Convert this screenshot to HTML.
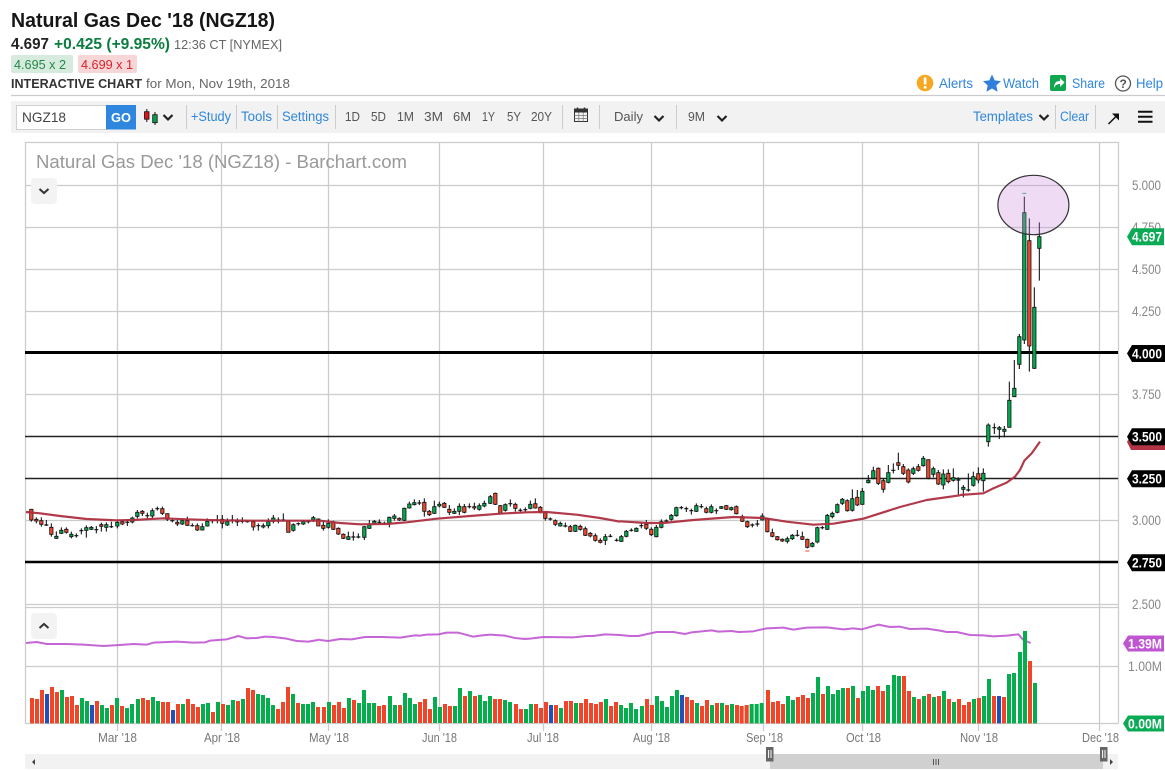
<!DOCTYPE html>
<html><head><meta charset="utf-8"><title>Natural Gas Dec '18 (NGZ18)</title>
<style>
html,body{margin:0;padding:0;background:#fff;width:1165px;height:770px;overflow:hidden}
svg{display:block}
text{font-family:"Liberation Sans",sans-serif}
.b{fill:#2f86de;font-size:13.5px}
.t{fill:#555;font-size:13px}
.ax{fill:#888;font-size:13.5px}
.dt{fill:#777;font-size:13px}
.tg{fill:#fff;font-size:14px;font-weight:bold}
.gr{stroke:#ccc;stroke-width:1.3;fill:none}
.sp{stroke:#ccc;stroke-width:1;fill:none}
.ch{stroke:#222;stroke-width:2.2;fill:none}
.w{stroke:#111;stroke-width:3.2;fill:none}
.d{stroke:#111;stroke-width:3.5;fill:none}
.g{fill:#00ab4e;stroke:#111;stroke-width:2.4}
.r{fill:#f0452a;stroke:#111;stroke-width:2.4}
.vg{fill:#05ae4c}.vr{fill:#f04528}.vb{fill:#2050b8}
.pu{fill:none;stroke:#c055d2;stroke-width:6;stroke-linejoin:round;opacity:.9}
.ma{fill:none;stroke:#ad2e40;stroke-width:6.5;stroke-linejoin:round;opacity:.95}
</style></head><body>
<svg width="1165" height="770" viewBox="0 0 1165 770" xmlns="http://www.w3.org/2000/svg">
<!-- header -->
<text x="11" y="27" font-size="20" font-weight="bold" fill="#151515" textLength="264" lengthAdjust="spacingAndGlyphs">Natural Gas Dec '18 (NGZ18)</text>
<text x="11" y="49" font-size="15.5" font-weight="bold" fill="#222" textLength="38" lengthAdjust="spacingAndGlyphs">4.697</text>
<text x="54" y="49" font-size="15.5" font-weight="bold" fill="#0b7d3e" textLength="116" lengthAdjust="spacingAndGlyphs">+0.425 (+9.95%)</text>
<text x="174" y="49" font-size="13" fill="#666" textLength="108" lengthAdjust="spacingAndGlyphs">12:36 CT [NYMEX]</text>
<rect x="11" y="55" width="62" height="18" rx="2" fill="#d6ebdd"/>
<text x="14" y="69" font-size="13" fill="#23884a" textLength="52" lengthAdjust="spacingAndGlyphs">4.695 x 2</text>
<rect x="78" y="55" width="59" height="18" rx="2" fill="#f6d6d6"/>
<text x="81" y="69" font-size="13" fill="#d8232a" textLength="52" lengthAdjust="spacingAndGlyphs">4.699 x 1</text>
<text x="11" y="88" font-size="12.5" font-weight="bold" fill="#333" textLength="131" lengthAdjust="spacingAndGlyphs">INTERACTIVE CHART</text>
<text x="146" y="88" font-size="13" fill="#666" textLength="144" lengthAdjust="spacingAndGlyphs">for Mon, Nov 19th, 2018</text>
<!-- top right -->
<circle cx="925" cy="83" r="8.3" fill="#f7a823"/><rect x="923.8" y="77.5" width="2.6" height="7" fill="#fff"/><rect x="923.8" y="86" width="2.6" height="2.6" fill="#fff"/>
<text x="939" y="88" class="b" textLength="34" lengthAdjust="spacingAndGlyphs">Alerts</text>
<path d="M992 74.500l2.700 5.900 6.300.7-4.700 4.300 1.300 6.300-5.600-3.200-5.600 3.200 1.300-6.300-4.700-4.300 6.300-.7z" fill="#2f7fdb"/>
<text x="1003" y="88" class="b" textLength="36" lengthAdjust="spacingAndGlyphs">Watch</text>
<rect x="1050" y="75" width="16" height="16" rx="2" fill="#11a650"/>
<path d="M1054 88c0-5 2-7 6-7v-3l4.500 4.500-4.500 4.500v-3c-3 0-4.500 1-6 4z" fill="#fff"/>
<text x="1072" y="88" class="b" textLength="33" lengthAdjust="spacingAndGlyphs">Share</text>
<circle cx="1123" cy="83.500" r="7.500" fill="none" stroke="#555" stroke-width="1.300"/>
<text x="1119.500" y="88" font-size="12" font-weight="bold" fill="#555">?</text>
<text x="1136" y="88" class="b" textLength="27" lengthAdjust="spacingAndGlyphs">Help</text>
<path d="M11 95.500H1165" stroke="#ccc" stroke-width="1.200"/>
<!-- toolbar -->
<rect x="11" y="101" width="1154" height="32" fill="#f2f2f2"/>
<rect x="16.500" y="105.500" width="90" height="24" fill="#fff" stroke="#d0d0d0"/>
<text x="22" y="122" font-size="14" fill="#444" textLength="44" lengthAdjust="spacingAndGlyphs">NGZ18</text>
<rect x="106" y="105" width="30" height="24.500" fill="#2f86de"/>
<text x="111" y="122" font-size="13" font-weight="bold" fill="#fff" textLength="20" lengthAdjust="spacingAndGlyphs">GO</text>
<path d="M146.800 109V122M155 112V125" stroke="#111"/>
<rect x="144.500" y="111.700" width="4.500" height="7.500" fill="#d8131b" stroke="#111" stroke-width=".8"/>
<rect x="152.700" y="114.700" width="4.500" height="8" fill="#0a9a48" stroke="#111" stroke-width=".8"/>
<path class="ch" d="M163.500 115l4.500 4.500 4.500-4.500"/>
<path class="sp" d="M186.500 105V129M236.500 105V129M277.500 105V129M335.500 105V129M562.500 105V129M599.500 105V129M676.500 105V129M1055.500 105V129M1095.500 105V129"/>
<text x="191" y="121" class="b" textLength="40" lengthAdjust="spacingAndGlyphs">+Study</text>
<text x="241" y="121" class="b" textLength="31" lengthAdjust="spacingAndGlyphs">Tools</text>
<text x="282" y="121" class="b" textLength="47" lengthAdjust="spacingAndGlyphs">Settings</text>
<text x="345" y="121" class="t" textLength="15" lengthAdjust="spacingAndGlyphs">1D</text>
<text x="371" y="121" class="t" textLength="15" lengthAdjust="spacingAndGlyphs">5D</text>
<text x="397" y="121" class="t" textLength="17" lengthAdjust="spacingAndGlyphs">1M</text>
<text x="424" y="121" class="t" textLength="19" lengthAdjust="spacingAndGlyphs">3M</text>
<text x="453" y="121" class="t" textLength="18" lengthAdjust="spacingAndGlyphs">6M</text>
<text x="482" y="121" class="t" textLength="13" lengthAdjust="spacingAndGlyphs">1Y</text>
<text x="507" y="121" class="t" textLength="14" lengthAdjust="spacingAndGlyphs">5Y</text>
<text x="531" y="121" class="t" textLength="21" lengthAdjust="spacingAndGlyphs">20Y</text>
<rect x="574.500" y="109" width="13" height="12.500" fill="#f2f2f2" stroke="#333" stroke-width="1"/>
<rect x="574.500" y="109" width="13" height="3.500" fill="#333"/>
<path d="M577.500 107.500v3M584.500 107.500v3" stroke="#333" stroke-width="1.500"/>
<path d="M578.800 112.500v9M583.200 112.500v9M574.500 115.500h13M574.500 118.500h13" stroke="#777" stroke-width=".7"/>
<text x="614" y="121" class="t" textLength="29" lengthAdjust="spacingAndGlyphs">Daily</text>
<path class="ch" d="M654.500 116l4.500 4.500 4.500-4.500"/>
<text x="688" y="121" class="t" textLength="17" lengthAdjust="spacingAndGlyphs">9M</text>
<path class="ch" d="M717.500 116l4.500 4.500 4.500-4.500"/>
<text x="973" y="121" class="b" textLength="60" lengthAdjust="spacingAndGlyphs">Templates</text>
<path class="ch" d="M1039.500 115l4.500 4.500 4.500-4.500"/>
<text x="1060" y="121" class="b" textLength="29" lengthAdjust="spacingAndGlyphs">Clear</text>
<path d="M1108.500 124l9-9" stroke="#111" stroke-width="1.500"/><path d="M1112 113.500h7v7z" fill="#111"/>
<path d="M1138 111.700h14.500M1138 116.700h14.500M1138 121.700h14.500" stroke="#111" stroke-width="2"/>
<!-- chart grid -->
<path class="gr" d="M25.500 142V723.500M1118.500 142V723.500M25 142.500H1118.500M25 185.500H1118M25 227.500H1118M25 269.500H1118M25 311.500H1118M25 394.500H1118M25 520.500H1118M25 604.500H1118M25 607.500H1118M25 666.500H1118M25 723.500H1118"/>
<path class="gr" d="M117.500 142V731M221.500 142V731M328.500 142V731M439.500 142V731M543.500 142V731M651.500 142V731M763.500 142V731M862.500 142V731M978.500 142V731M1099.500 142V731"/>
<path d="M25 352.500H1118" stroke="#000" stroke-width="3"/>
<path d="M25 436.500H1118M25 478.500H1118" stroke="#222" stroke-width="1.400"/>
<path d="M25 562H1118" stroke="#000" stroke-width="2.500"/>
<text x="36" y="168" font-size="18" fill="#999" textLength="371" lengthAdjust="spacingAndGlyphs">Natural Gas Dec '18 (NGZ18) - Barchart.com</text>
<rect x="31" y="178" width="26" height="26" rx="4" fill="#f3f3f3"/>
<path d="M39.500 189l4.500 4 4.500-4" fill="none" stroke="#333" stroke-width="2"/>
<rect x="31" y="613" width="26" height="26" rx="4" fill="#f3f3f3"/>
<path d="M39.500 628l4.500-4 4.500 4" fill="none" stroke="#333" stroke-width="2"/>
<!-- candles A -->
<g transform="translate(20 490) scale(.33333)">
<path class="w" d="M34 58V95M49 82V100M64 82V110M79 90V108M94 100V140M109 124V147M124 112V132M139 112V131M154 125V145M169 130V143M184 115V133M199 106V143M214 108V120M229 108V130M244 98V125M259 97V125M274 95V114M292 92V115M307 90V105M322 88V108M337 80V100M352 60V85M367 60V78M382 68V85M397 55V84M412 50V62M427 50V75M442 70V93M457 85V97M472 90V108M487 85V105M502 80V108M517 100V110M532 100V123M547 100V122M562 85V110M577 88V100M592 75V100M607 75V115M622 85V108M637 75V100M652 85V108M667 82V100M682 90V98M700 90V122M715 100V122M730 100V115M745 85V115M760 75V100M775 82V100M790 70V95M805 90V127M820 100V125M835 97V107M850 90V105M865 90V100M880 78V96M895 85V108"/>
<path class="d" d="M73 105h12M163 137h12M178 122h12M223 119h12M268 110h12M316 97h12M376 77h12M406 56h12M451 92h12M511 107h12M571 92h12M586 90h12M631 90h12M661 94h12M676 95h12M709 107h12M769 90h12M784 90h12M829 101h12M859 95h12"/>
<path class="g" d="M104 139h10v6h-10zM119 121h10v9h-10zM149 133h10v7h-10zM194 113h10v8h-10zM209 112h10v6h-10zM254 104h10v8h-10zM287 97h10v11h-10zM332 84h10v12h-10zM347 67h10v12h-10zM392 62h10v16h-10zM482 92h10v10h-10zM542 110h10v10h-10zM557 94h10v14h-10zM617 95h10v10h-10zM725 107h10v4h-10zM740 95h10v12h-10zM755 84h10v10h-10zM815 104h10v17h-10zM845 95h10v7h-10zM875 83h10v7h-10z"/>
<path class="r" d="M29 58h10v32h-10zM44 88h10v5h-10zM59 92h10v11h-10zM89 112h10v21h-10zM134 118h10v9h-10zM239 104h10v5h-10zM302 95h10v7h-10zM362 64h10v6h-10zM422 56h10v14h-10zM437 71h10v17h-10zM467 97h10v5h-10zM497 92h10v14h-10zM527 107h10v13h-10zM602 88h10v12h-10zM647 92h10v4h-10zM695 95h10v16h-10zM800 92h10v35h-10zM890 87h10v21h-10z"/>
</g>
<!-- candles B -->
<g transform="translate(320 490) scale(.33333)">
<path class="w" d="M10 90V122M25 88V116M40 92V120M55 112V135M70 130V147M85 125V150M100 125V152M115 130V145M133 108V150M148 90V117M163 90V102M178 88V102M193 95V103M208 80V112M223 72V92M238 82V93M253 53V93M268 35V56M283 28V46M298 30V45M313 25V80M328 60V78M343 32V72M358 35V52M373 36V54M388 45V75M403 55V72M418 40V75M433 42V70M448 40V55M463 38V60M478 40V62M493 32V52M511 15V42M526 8V45M541 45V72M556 40V65M571 28V50M586 38V65M601 55V68M616 52V65M631 32V58M646 25V56M661 48V70M676 65V92M691 82V92M706 88V108M721 95V110M736 98V112M751 105V126M766 104V126M781 104V122M796 110V138M811 126V142M826 130V155M841 145V160M856 132V165M871 132V142M890 145V155"/>
<path class="d" d="M94 141h12M109 141h12M172 97h12M187 100h12M292 39h12M595 61h12M610 59h12M565 41h12M685 87h12M730 108h12M865 139h12M884 151h12M442 50h12"/>
<path class="g" d="M20 100h10v12h-10zM80 140h10v8h-10zM128 110h10v32h-10zM143 105h10v10h-10zM158 94h10v6h-10zM203 82h10v18h-10zM218 78h10v7h-10zM248 55h10v36h-10zM263 42h10v12h-10zM278 38h10v6h-10zM338 50h10v20h-10zM353 43h10v5h-10zM398 64h10v6h-10zM413 49h10v15h-10zM473 47h10v11h-10zM488 40h10v8h-10zM506 20h10v20h-10zM551 44h10v17h-10zM626 43h10v12h-10zM716 100h10v8h-10zM761 106h10v18h-10zM851 140h10v11h-10z"/>
<path class="r" d="M5 106h10v9h-10zM35 96h10v22h-10zM50 115h10v17h-10zM65 133h10v12h-10zM233 85h10v5h-10zM308 37h10v27h-10zM323 64h10v10h-10zM368 40h10v12h-10zM383 58h10v9h-10zM428 50h10v17h-10zM458 50h10v4h-10zM521 10h10v33h-10zM536 47h10v23h-10zM581 43h10v12h-10zM641 41h10v13h-10zM656 52h10v13h-10zM671 68h10v17h-10zM701 92h10v11h-10zM746 110h10v14h-10zM776 109h10v9h-10zM791 116h10v20h-10zM806 130h10v8h-10zM821 137h10v14h-10zM836 151h10v6h-10z"/>
</g>
<!-- candles C -->
<g transform="translate(620 440) scale(.33333)">
<path class="w" d="M4 285V306M19 270V292M34 265V275M49 262V276M64 250V265M79 240V270M94 262V288M109 255V292M124 238V265M139 238V246M154 222V242M169 200V230M184 198V208M199 200V216M214 206V224M229 190V216M244 192V205M259 200V220M274 193V220M289 205V222M304 198V207M319 195V210M334 200V212M349 196V223M367 224V246M382 242V264M397 250V262M412 240V260M427 220V242M442 233V277M457 266V292M472 288V302M487 295V306M502 290V310M517 282V300M532 270V290M547 275V300M562 296V325M577 306V322M592 260V310M607 258V268M622 222V270M637 215V235M652 190V220M667 174V195M682 178V215M697 148V215M712 150V198M727 144V195M745 105V130M760 80V118M775 82V135M790 115V158M805 75V130M820 70V100M835 38V90M850 72V105M865 85V130M880 80V105M895 72V95M910 48V80M925 58V118M940 80V112M955 90V135M970 88V148M985 88V130M1000 85V125M1015 112V165"/>
<path class="d" d="M28 271h12M58 257h12M133 243h12M178 203h12M193 206h12M208 212h12M238 200h12M283 212h12M391 255h12M406 252h12M526 286h12M601 263h12M814 91h12M1009 120h12"/>
<path class="g" d="M-1 290h10v14h-10zM14 274h10v15h-10zM44 265h10v9h-10zM104 262h10v28h-10zM119 245h10v17h-10zM149 226h10v12h-10zM164 203h10v24h-10zM224 197h10v17h-10zM269 200h10v17h-10zM299 200h10v5h-10zM329 203h10v6h-10zM422 228h10v12h-10zM497 296h10v8h-10zM512 286h10v10h-10zM572 310h10v9h-10zM587 263h10v43h-10zM617 226h10v42h-10zM632 220h10v10h-10zM647 194h10v23h-10zM662 178h10v12h-10zM692 176h10v35h-10zM722 154h10v39h-10zM740 121h10v7h-10zM755 92h10v23h-10zM800 98h10v29h-10zM875 86h10v14h-10zM905 55h10v22h-10zM935 86h10v17h-10zM965 102h10v33h-10zM995 113h10v8h-10z"/>
<path class="r" d="M74 253h10v12h-10zM89 268h10v16h-10zM254 206h10v11h-10zM314 197h10v11h-10zM344 200h10v21h-10zM362 230h10v14h-10zM377 245h10v15h-10zM437 236h10v39h-10zM452 278h10v11h-10zM467 290h10v9h-10zM482 298h10v5h-10zM542 290h10v8h-10zM557 298h10v24h-10zM677 182h10v30h-10zM707 172h10v23h-10zM770 85h10v45h-10zM785 122h10v26h-10zM830 68h10v8h-10zM845 80h10v20h-10zM860 90h10v36h-10zM890 80h10v11h-10zM920 59h10v56h-10zM950 98h10v34h-10zM980 100h10v25h-10z"/>
<path d="M556 333h12" stroke="#f0452a" stroke-width="3"/>
</g>
<!-- candles D -->
<g transform="translate(960 390) scale(.33333)">
<path class="w" d="M10 285V322M25 250V305M40 245V290M55 232V280M70 235V305M85 100V170M103 100V132M118 108V147M133 108V142M148 0V113"/>
<path class="d" d="M19 300h12M97 113h12"/>
<path class="g" d="M5 292h10v6h-10zM35 260h10v26h-10zM65 250h10v22h-10zM80 105h10v50h-10zM113 113h10v5h-10zM128 118h10v6h-10zM143 31h10v81h-10z"/>
<path class="r" d="M50 251h10v19h-10z"/>
</g>
<!-- candles E -->
<g transform="translate(960 170) scale(.33333)">
<path class="w" d="M148 635V660M163 570V668M178 492V597M193 80V522M208 145V605M223 352V597M238 157V332"/>
<path class="g" d="M158 655h10v25h-10zM173 500h10v83h-10zM188 128h10v382h-10zM218 412h10v183h-10zM233 200h10v35h-10z"/>
<path class="r" d="M203 212h10v316h-10z"/>
<path d="M187 70h12" stroke="#3aa878" stroke-width="3"/>
</g>
<!-- moving average -->
<g transform="translate(20 490) scale(.33333)"><polyline class="ma" points="18,66 60,70 120,78 200,87 290,91 340,90 430,85 500,88 600,91 700,92 800,92 900,92"/></g>
<g transform="translate(320 490) scale(.33333)"><polyline class="ma" points="0,92 60,99 120,103 200,102 260,97 350,86 450,78 540,71 620,67 680,66 770,74 840,84 900,95"/></g>
<g transform="translate(620 440) scale(.33333)"><polyline class="ma" points="0,244 80,249 130,249 220,240 340,231 430,234 500,245 580,254 640,251 730,236 840,201 920,180 1020,166"/></g>
<g transform="translate(960 390) scale(.33333)"><polyline class="ma" points="0,315 70,310 100,295 140,278 165,260 180,240 193,212 215,190 240,155"/></g>
<ellipse cx="1033.400" cy="205" rx="35.500" ry="29.700" fill="#c98bdb" fill-opacity=".3" stroke="#333" stroke-width="1.200"/>
<!-- purple line -->
<g transform="translate(20 600) scale(.33333)"><polyline class="pu" points="18,129 50,126 80,132 140,132 190,134 250,138 300,135 340,132 380,134 400,128 470,125 520,128 555,127 570,122 620,118 655,108 680,115 710,114 735,110 760,111 800,116 830,123 865,125 900,119"/></g>
<g transform="translate(320 620) scale(.33333)"><polyline class="pu" points="0,60 25,63 60,57 95,58 135,51 190,51 240,53 285,46 300,47 320,44 355,43 380,38 415,38 460,50 480,47 510,44 555,47 585,54 615,57 630,56"/></g>
<g transform="translate(530 620) scale(.33333)"><polyline class="pu" points="0,56 40,51 130,52 170,48 190,48 225,43 270,45 300,48 325,48 380,36 430,36 465,42 485,37 545,31 565,35 605,33 625,36 630,36"/></g>
<g transform="translate(740 600) scale(.33333)"><polyline class="pu" points="0,96 40,94 80,85 130,83 160,89 200,83 260,82 310,88 340,85 365,88 415,74 450,81 480,80 510,87 560,86 600,92 620,96 650,96 690,105 730,106 760,109 800,107 835,103 850,120 872,129"/></g>
<!-- volume 1 -->
<g transform="translate(20 600) scale(.33333)">
<path class="vg" d="M120 270h12V370h-12zM180 294h12V370h-12zM195 303h12V370h-12zM240 315h12V370h-12zM255 324h12V370h-12zM285 294h12V370h-12zM315 324h12V370h-12zM330 312h12V370h-12zM348 297h12V370h-12zM393 291h12V370h-12zM408 303h12V370h-12zM483 312h12V370h-12zM543 312h12V370h-12zM558 309h12V370h-12zM588 306h12V370h-12zM618 315h12V370h-12zM633 300h12V370h-12zM663 297h12V370h-12zM708 282h12V370h-12zM723 285h12V370h-12zM738 294h12V370h-12zM753 315h12V370h-12zM813 282h12V370h-12zM843 312h12V370h-12zM858 312h12V370h-12zM873 306h12V370h-12z"/>
<path class="vr" d="M30 294h12V370h-12zM45 297h12V370h-12zM60 270h12V370h-12zM90 261h12V370h-12zM105 276h12V370h-12zM135 291h12V370h-12zM150 288h12V370h-12zM165 315h12V370h-12zM225 303h12V370h-12zM270 315h12V370h-12zM300 318h12V370h-12zM363 294h12V370h-12zM378 300h12V370h-12zM423 306h12V370h-12zM438 306h12V370h-12zM468 312h12V370h-12zM498 297h12V370h-12zM513 312h12V370h-12zM528 321h12V370h-12zM573 336h12V370h-12zM603 312h12V370h-12zM648 303h12V370h-12zM678 264h12V370h-12zM693 270h12V370h-12zM768 327h12V370h-12zM783 306h12V370h-12zM798 261h12V370h-12zM828 309h12V370h-12zM888 321h12V370h-12z"/>
<path class="vb" d="M75 282h12V370h-12zM210 315h12V370h-12zM453 330h12V370h-12z"/>
</g>
<!-- volume 2 -->
<g transform="translate(320 620) scale(.33333)">
<path class="vg" d="M21 246h12V309h-12zM81 234h12V309h-12zM111 249h12V309h-12zM126 210h12V309h-12zM141 249h12V309h-12zM156 249h12V309h-12zM204 228h12V309h-12zM219 255h12V309h-12zM249 219h12V309h-12zM264 234h12V309h-12zM279 252h12V309h-12zM339 231h12V309h-12zM354 261h12V309h-12zM399 258h12V309h-12zM414 204h12V309h-12zM444 213h12V309h-12zM474 225h12V309h-12zM489 243h12V309h-12zM504 228h12V309h-12zM549 240h12V309h-12zM564 246h12V309h-12zM612 267h12V309h-12zM627 252h12V309h-12z"/>
<path class="vr" d="M6 261h12V309h-12zM36 255h12V309h-12zM51 246h12V309h-12zM66 264h12V309h-12zM96 240h12V309h-12zM171 258h12V309h-12zM186 255h12V309h-12zM234 255h12V309h-12zM294 246h12V309h-12zM309 237h12V309h-12zM324 267h12V309h-12zM369 252h12V309h-12zM384 258h12V309h-12zM429 228h12V309h-12zM459 228h12V309h-12zM519 237h12V309h-12zM534 237h12V309h-12zM582 252h12V309h-12zM597 267h12V309h-12zM642 252h12V309h-12z"/>
</g>
<!-- volume 3 -->
<g transform="translate(530 620) scale(.33333)">
<path class="vg" d="M87 264h12V309h-12zM132 249h12V309h-12zM222 237h12V309h-12zM267 255h12V309h-12zM282 264h12V309h-12zM297 249h12V309h-12zM312 267h12V309h-12zM330 258h12V309h-12zM375 228h12V309h-12zM390 243h12V309h-12zM405 261h12V309h-12zM420 228h12V309h-12zM435 210h12V309h-12zM495 249h12V309h-12zM540 255h12V309h-12zM570 249h12V309h-12zM600 252h12V309h-12z"/>
<path class="vr" d="M27 264h12V309h-12zM42 246h12V309h-12zM72 255h12V309h-12zM102 243h12V309h-12zM117 243h12V309h-12zM147 249h12V309h-12zM162 237h12V309h-12zM177 249h12V309h-12zM192 252h12V309h-12zM207 246h12V309h-12zM237 258h12V309h-12zM252 246h12V309h-12zM345 237h12V309h-12zM360 255h12V309h-12zM465 231h12V309h-12zM480 240h12V309h-12zM510 258h12V309h-12zM525 240h12V309h-12zM555 249h12V309h-12zM585 255h12V309h-12zM615 255h12V309h-12z"/>
<path class="vb" d="M57 255h12V309h-12zM450 225h12V309h-12z"/>
</g>
<!-- volume 4 -->
<g transform="translate(740 600) scale(.33333)">
<path class="vg" d="M29 312h12V370h-12zM44 312h12V370h-12zM59 309h12V370h-12zM138 288h12V370h-12zM153 300h12V370h-12zM213 279h12V370h-12zM228 231h12V370h-12zM258 258h12V370h-12zM273 282h12V370h-12zM288 270h12V370h-12zM303 264h12V370h-12zM333 258h12V370h-12zM363 273h12V370h-12zM378 258h12V370h-12zM393 270h12V370h-12zM438 255h12V370h-12zM456 225h12V370h-12zM471 228h12V370h-12zM516 291h12V370h-12zM546 288h12V370h-12zM576 291h12V370h-12zM606 273h12V370h-12zM636 306h12V370h-12zM696 297h12V370h-12zM726 288h12V370h-12zM741 237h12V370h-12zM801 222h12V370h-12zM816 219h12V370h-12zM834 156h12V370h-12zM849 93h12V370h-12zM879 249h12V370h-12z"/>
<path class="vr" d="M-1 318h12V370h-12zM14 315h12V370h-12zM78 270h12V370h-12zM93 306h12V370h-12zM108 303h12V370h-12zM123 312h12V370h-12zM168 291h12V370h-12zM183 285h12V370h-12zM198 294h12V370h-12zM243 282h12V370h-12zM318 264h12V370h-12zM348 294h12V370h-12zM408 258h12V370h-12zM423 273h12V370h-12zM486 228h12V370h-12zM501 273h12V370h-12zM531 297h12V370h-12zM561 282h12V370h-12zM591 288h12V370h-12zM621 297h12V370h-12zM651 297h12V370h-12zM666 315h12V370h-12zM681 306h12V370h-12zM711 294h12V370h-12zM756 288h12V370h-12zM786 291h12V370h-12zM864 183h12V370h-12z"/>
<path class="vb" d="M771 288h12V370h-12z"/>
</g>
<!-- axis labels -->
<g class="ax">
<text x="1132" y="190" textLength="29" lengthAdjust="spacingAndGlyphs">5.000</text>
<text x="1132" y="232" textLength="29" lengthAdjust="spacingAndGlyphs">4.750</text>
<text x="1132" y="274" textLength="29" lengthAdjust="spacingAndGlyphs">4.500</text>
<text x="1132" y="316" textLength="29" lengthAdjust="spacingAndGlyphs">4.250</text>
<text x="1132" y="399" textLength="29" lengthAdjust="spacingAndGlyphs">3.750</text>
<text x="1132" y="525" textLength="29" lengthAdjust="spacingAndGlyphs">3.000</text>
<text x="1132" y="609" textLength="29" lengthAdjust="spacingAndGlyphs">2.500</text>
<text x="1128" y="671" textLength="34" lengthAdjust="spacingAndGlyphs">1.00M</text>
</g>
<!-- tags -->
<path d="M1127 442l4-8h34v16h-34z" fill="#b23345"/>
<path d="M1127 236.700l5-8.500h32v17h-32z" fill="#0bab55"/>
<text x="1132" y="241.700" class="tg" textLength="30" lengthAdjust="spacingAndGlyphs">4.697</text>
<path d="M1127 353.500l5-8.500h33v17h-33z" fill="#000"/>
<text x="1132" y="358.500" class="tg" textLength="30" lengthAdjust="spacingAndGlyphs">4.000</text>
<path d="M1127 436.700l5-8.500h33v17h-33z" fill="#000"/>
<text x="1132" y="441.700" class="tg" textLength="30" lengthAdjust="spacingAndGlyphs">3.500</text>
<path d="M1127 478.700l5-8.500h33v17h-33z" fill="#000"/>
<text x="1132" y="483.700" class="tg" textLength="30" lengthAdjust="spacingAndGlyphs">3.250</text>
<path d="M1127 562.700l5-8.500h33v17h-33z" fill="#000"/>
<text x="1132" y="567.700" class="tg" textLength="30" lengthAdjust="spacingAndGlyphs">2.750</text>
<path d="M1123 643.500l5-8h36v16h-36z" fill="#c055d2"/>
<text x="1128" y="648.500" class="tg" textLength="34" lengthAdjust="spacingAndGlyphs">1.39M</text>
<path d="M1123 723.500l5-8h36v16h-36z" fill="#0bab55"/>
<text x="1128" y="728.500" class="tg" textLength="34" lengthAdjust="spacingAndGlyphs">0.00M</text>
<!-- dates -->
<g class="dt">
<text x="98" y="742" textLength="39" lengthAdjust="spacingAndGlyphs">Mar '18</text>
<text x="204" y="742" textLength="36" lengthAdjust="spacingAndGlyphs">Apr '18</text>
<text x="309" y="742" textLength="40" lengthAdjust="spacingAndGlyphs">May '18</text>
<text x="422" y="742" textLength="35" lengthAdjust="spacingAndGlyphs">Jun '18</text>
<text x="527" y="742" textLength="32" lengthAdjust="spacingAndGlyphs">Jul '18</text>
<text x="633" y="742" textLength="37" lengthAdjust="spacingAndGlyphs">Aug '18</text>
<text x="746" y="742" textLength="37" lengthAdjust="spacingAndGlyphs">Sep '18</text>
<text x="846" y="742" textLength="35" lengthAdjust="spacingAndGlyphs">Oct '18</text>
<text x="960" y="742" textLength="38" lengthAdjust="spacingAndGlyphs">Nov '18</text>
<text x="1082" y="742" textLength="37" lengthAdjust="spacingAndGlyphs">Dec '18</text>
</g>
<!-- scrollbar -->
<rect x="25" y="754" width="1093" height="15" fill="#f2f2f2"/>
<rect x="770" y="754" width="333" height="15" fill="#d0d0d0"/>
<path d="M35 759l-3 3 3 3z" fill="#444"/>
<path d="M1110 759l3 3-3 3z" fill="#444"/>
<path d="M933.500 759v6M936 759v6M938.500 759v6" stroke="#555"/>
<rect x="766" y="747" width="7.500" height="14.500" fill="#666"/>
<path d="M768.600 750v8M771 750v8" stroke="#fff"/>
<rect x="1100" y="747" width="7.500" height="14.500" fill="#666"/>
<path d="M1102.600 750v8M1105 750v8" stroke="#fff"/>
</svg>
</body></html>
